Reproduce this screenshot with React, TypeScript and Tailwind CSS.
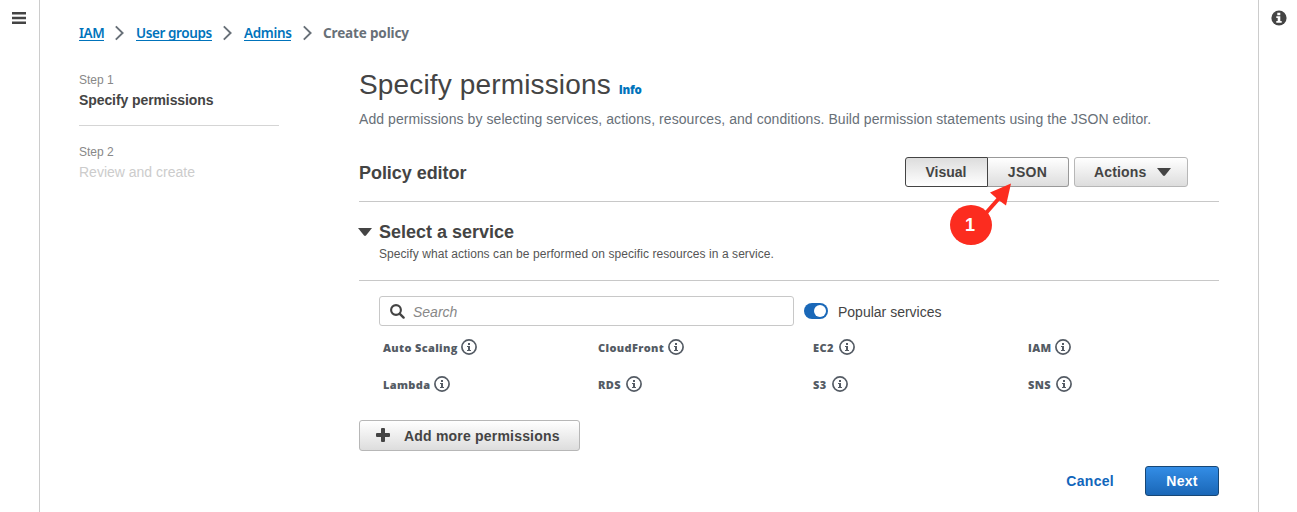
import React from "react";

function InfoIcon() {
  return (
    <svg width="16" height="16" viewBox="0 0 16 16" className="shrink-0" aria-hidden="true">
      <circle cx="8" cy="8" r="7.1" fill="none" stroke="#545b64" strokeWidth="1.7" />
      <path d="M7 4h2v2H7zM6 7h3v4h1v1H6v-1h1V8H6z" fill="#545b64" />
    </svg>
  );
}

function Chevron() {
  return (
    <svg width="10" height="16" viewBox="0 0 10 16" className="shrink-0" aria-hidden="true">
      <path d="M.8 1.400 7.600 8 .8 14.600" fill="none" stroke="#687078" strokeWidth="1.9" />
    </svg>
  );
}

function Caret() {
  return (
    <svg width="14" height="8" viewBox="0 0 14 8" className="shrink-0" aria-hidden="true">
      <path d="M0 0h14L8 7.600q-1 .8-2 0z" fill="#444" />
    </svg>
  );
}

function Service({ name, width }: { name: string; width: string }) {
  return (
    <div className="flex h-4 items-center">
      <span className={`pt-0.5 font-['Open_Sans'] text-[11px] leading-4 font-extrabold tracking-[0.35px] text-[#545b64] ${width}`}>{name}</span>
      <InfoIcon />
    </div>
  );
}

const link =
  "border-b border-[#0073bb] text-[#0073bb] font-semibold leading-[17px] h-4 block";

export default function App() {
  return (
    <div className="flex h-[512px] w-[1297px] overflow-hidden bg-white font-['Liberation_Sans',Arial,sans-serif] text-sm whitespace-nowrap text-[#444]">
      <aside className="flex w-10 shrink-0 justify-start border-r border-[#ccc] pt-3 pl-3">
        <svg width="14" height="12" viewBox="0 0 14 12" aria-hidden="true">
          <path d="M0 0h14v2.500H0zM0 4.800h14v2.400H0zM0 9.500h14V12H0z" fill="#444" />
        </svg>
      </aside>

      <main className="flex w-[1218px] shrink-0 flex-col pt-[25px] pl-[39px]">
        <nav className="flex h-4 items-center font-['Noto_Sans',sans-serif] text-[13.5px]">
          <a className={`${link} w-[25px] tracking-[-0.4px]`}>IAM</a>
          <span className="ml-[11px] mr-[11px] flex"><Chevron /></span>
          <a className={`${link} w-[76px] tracking-[-0.4px]`}>User groups</a>
          <span className="ml-[11px] mr-[11px] flex"><Chevron /></span>
          <a className={`${link} w-[47px] tracking-[-0.35px]`}>Admins</a>
          <span className="ml-3 mr-[10px] flex"><Chevron /></span>
          <span className="leading-4 font-bold tracking-[-0.15px] text-[#687078]">Create policy</span>
        </nav>

        <div className="flex gap-20 pt-[26px]">
          <aside className="w-[200px] pt-[5px]">
            <div className="text-xs leading-4 text-[#888]">Step 1</div>
            <div className="mt-0.5 text-sm leading-5 font-bold tracking-[-0.09px]">Specify permissions</div>
            <div className="mt-[15px] mb-[18px] h-px bg-[#d5d5d5]" />
            <div className="text-xs leading-4 text-[#888]">Step 2</div>
            <div className="mt-0.5 text-sm leading-5 text-[#ccc]">Review and create</div>
          </aside>

          <section className="w-[860px]">
            <div className="flex h-9 items-baseline gap-2">
              <h1 className="text-[28px] leading-9 tracking-[0.15px]">Specify permissions</h1>
              <a className="font-['Open_Sans'] text-[11.5px] font-extrabold tracking-[-0.25px] text-[#0073bb]">Info</a>
            </div>
            <p className="mt-[6px] leading-5 tracking-[0.075px] text-[#687078]">
              Add permissions by selecting services, actions, resources, and conditions. Build permission statements using the JSON editor.
            </p>

            <div className="relative mt-7 flex h-[45px] border-b border-[#c8c8c8]">
              <h2 className="flex-1 text-lg leading-8 font-bold tracking-[-0.05px]">Policy editor</h2>
              <div className="mr-[31px] flex h-[30px] font-bold">
                <button className="w-[83px] rounded-l-[3px] border border-[#444] bg-linear-to-b from-[#ddd] to-white pr-px leading-7">Visual</button>
                <button className="mr-[5px] w-[81px] rounded-r-[3px] border border-l-0 border-[#999] bg-linear-to-b from-white to-[#ddd] pr-px leading-7 tracking-[0.3px]">JSON</button>
                <button className="flex w-[114px] items-center gap-2.5 rounded-[3px] border border-[#b7b7b7] bg-linear-to-b from-white to-[#ddd] pl-[19px] leading-7">
                  <span className="w-[53px] text-left tracking-[0.15px]">Actions</span><Caret />
                </button>
              </div>
              <div className="absolute top-[26px] left-[590px] h-[63px] w-[64px]">
                <svg width="64" height="63" viewBox="0 0 64 63" className="absolute" aria-hidden="true">
                  <path d="M37 30 52 13" stroke="#fc2c1f" strokeWidth="4" />
                  <path d="M62 .5 57 22.500 49.500 17 41 9.500z" fill="#fc2c1f" />
                  <ellipse cx="22" cy="42" rx="21" ry="20" fill="#fc2c1f" />
                </svg>
                <span className="absolute top-[32px] left-[11px] w-5 text-center text-[18px] leading-5 font-bold text-white">1</span>
              </div>
            </div>

            <div className="flex h-[79px] border-b border-[#c8c8c8] pt-[19px]">
              <span className="-ml-px mr-[7px] pt-[7px]"><Caret /></span>
              <div>
                <h3 className="text-lg leading-[22px] font-bold">Select a service</h3>
                <p className="mt-[3px] text-xs leading-4 tracking-[0.065px] text-[#555]">Specify what actions can be performed on specific resources in a service.</p>
              </div>
            </div>

            <div className="flex pt-[15px] pl-5">
              <div className="flex h-[30px] w-[415px] items-center rounded-[3px] border border-[#c8c8c8] pl-2.5">
                <svg width="15" height="15" viewBox="0 0 15 15" aria-hidden="true">
                  <circle cx="6" cy="6" r="4.900" fill="none" stroke="#444" strokeWidth="2.100" />
                  <path d="m9.600 9.600 4 4" stroke="#444" strokeWidth="2.400" strokeLinecap="round" />
                </svg>
                <span className="mt-px ml-[8px] leading-5 text-[#888] italic">Search</span>
              </div>
              <div className="ml-2.5 flex h-[30px] items-center">
                <span className="flex h-4 w-6 justify-end rounded-full bg-[#1a68b8] p-[2px]">
                  <span className="h-3 w-3 rounded-full bg-white" />
                </span>
                <span className="mt-px ml-2.5 leading-5">Popular services</span>
              </div>
            </div>

            <div className="grid grid-cols-[215px_215px_215px_auto] gap-y-[21px] pt-[13px] pl-6">
              <Service name="Auto Scaling" width="w-[78px]" />
              <Service name="CloudFront" width="w-[70px]" />
              <Service name="EC2" width="w-[26px]" />
              <Service name="IAM" width="w-[27px]" />
              <Service name="Lambda" width="w-[51px]" />
              <Service name="RDS" width="w-[28px]" />
              <Service name="S3" width="w-[19px]" />
              <Service name="SNS" width="w-[28px]" />
            </div>

            <button className="mt-7 flex h-[31px] w-[221px] items-center rounded-[3px] border border-[#b7b7b7] bg-linear-to-b from-white to-[#ddd] pl-4 font-bold tracking-[0.2px]">
              <svg width="14" height="14" viewBox="0 0 14 14" className="mr-3.5 -mt-0.5" aria-hidden="true">
                <path d="M5 1q0-1 1-1h2q1 0 1 1v4h4q1 0 1 1v2q0 1-1 1H9v4q0 1-1 1H6q-1 0-1-1V9H1Q0 9 0 8V6q0-1 1-1h4z" fill="#444" />
              </svg>
              Add more permissions
            </button>
            <div className="mt-[15px] flex items-center justify-end font-bold">
              <a className="mr-[31px] tracking-[0.3px] text-[#1166bb]">Cancel</a>
              <button className="h-[30px] w-[74px] rounded-[3px] border border-[#174776] bg-linear-to-b from-[#338de6] to-[#1a67b7] tracking-[0.3px] text-white">Next</button>
            </div>
          </section>
        </div>
      </main>

      <aside className="flex flex-1 items-start border-l border-[#ccc] pt-2.5 pl-3">
        <svg width="16" height="16" viewBox="0 0 16 16" aria-hidden="true">
          <circle cx="8" cy="8" r="7.600" fill="#444" />
          <path d="M6.300 2.800h3v2.400h-3zM5.300 6.300h4v4.700h1.400v1.800H5.300V11h1.400V8.100H5.300z" fill="#fff" />
        </svg>
      </aside>
    </div>
  );
}
